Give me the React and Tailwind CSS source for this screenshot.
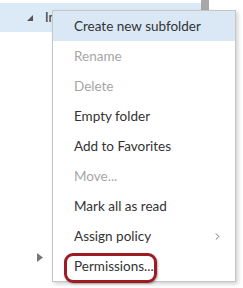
import { ChevronRight } from 'lucide-react';

const items = [
  { label: 'Create new subfolder', active: true },
  { label: 'Rename', disabled: true },
  { label: 'Delete', disabled: true },
  { label: 'Empty folder' },
  { label: 'Add to Favorites' },
  { label: 'Move...', disabled: true },
  { label: 'Mark all as read' },
  { label: 'Assign policy', submenu: true },
  { label: 'Permissions...' },
];

const App = () => {
  return (
    <div
      className="relative w-[243px] h-[288px] overflow-hidden bg-white"
      style={{ fontFamily: 'Lato, "Liberation Sans", sans-serif' }}
    >
      {/* folder tree behind the menu */}
      <div className="flex flex-col h-full pt-[3px] pb-[26px]">
        <div className="flex items-center h-[29px] w-[201px] bg-[#dce9f6]">
          <svg width="6" height="6" viewBox="0 0 6 6" className="ml-[27px] mt-[1px]">
            <polygon points="6,0 6,6 0,6" fill="#555" />
          </svg>
          <span className="ml-[12px] text-[13px] text-[#333]">Inbox</span>
        </div>
        <div className="flex-1" />
        <div className="pl-[37px]">
          <svg width="6" height="9" viewBox="0 0 6 9" className="block">
            <polygon points="0,0 6,4.5 0,9" fill="#777" />
          </svg>
        </div>
      </div>
      <div className="absolute left-[201px] top-0 w-[8px] h-[10px] bg-[#a8a8a8]" />

      {/* context menu */}
      <div className="absolute left-[52px] top-[10px] w-[184px] border border-[#c6c6c6] bg-white shadow-[2px_2px_4px_rgba(0,0,0,0.18)]">
        {items.map((item) => (
          <div
            key={item.label}
            className={`flex items-center justify-between h-[30px] pl-[21px] pr-[12px] text-[13.5px] ${
              item.active ? 'bg-[#dae8f6]' : ''
            } ${item.disabled ? 'text-[#a6a6a6]' : 'text-[#333]'}`}
          >
            <span>{item.label}</span>
            {item.submenu && <ChevronRight className="w-[11px] h-[11px] text-[#666]" strokeWidth={2} />}
          </div>
        ))}
      </div>

      {/* annotation */}
      <div className="absolute left-[64px] top-[253px] w-[93px] h-[30px] rounded-[9px] border-[3px] border-[#9d1c23] shadow-[1px_1px_2px_rgba(0,0,0,0.3)]" />
    </div>
  );
};

export default App;
